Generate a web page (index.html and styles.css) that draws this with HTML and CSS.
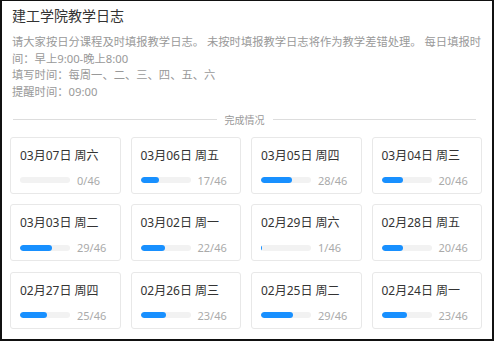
FILE: index.html
```html
<!DOCTYPE html>
<html lang="zh-CN">
<head>
  <meta charset="UTF-8" />
  <meta name="viewport" content="width=device-width, initial-scale=1.0" />
  <title>建工学院教学日志</title>
  <link rel="stylesheet" href="styles.css">
</head>
<body>
  <div class="page">
    <h1 class="title">建工学院教学日志</h1>
    <div class="notice">
      <p>请大家按日分课程及时填报教学日志。 未按时填报教学日志将作为教学差错处理。 每日填报时间：早上9:00-晚上8:00</p>
      <p>填写时间：每周一、二、三、四、五、六</p>
      <p>提醒时间：09:00</p>
    </div>

    <div class="divider"><span>完成情况</span></div>

    <div class="days">
      <div class="day">
        <div class="day-date">03月07日 周六</div>
        <div class="day-progress"><div class="bar"><div class="fill" style="width: 0%"></div></div><span class="count">0/46</span></div>
      </div>
      <div class="day">
        <div class="day-date">03月06日 周五</div>
        <div class="day-progress"><div class="bar"><div class="fill" style="width: 37%"></div></div><span class="count">17/46</span></div>
      </div>
      <div class="day">
        <div class="day-date">03月05日 周四</div>
        <div class="day-progress"><div class="bar"><div class="fill" style="width: 61%"></div></div><span class="count">28/46</span></div>
      </div>
      <div class="day">
        <div class="day-date">03月04日 周三</div>
        <div class="day-progress"><div class="bar"><div class="fill" style="width: 43%"></div></div><span class="count">20/46</span></div>
      </div>

      <div class="day">
        <div class="day-date">03月03日 周二</div>
        <div class="day-progress"><div class="bar"><div class="fill" style="width: 63%"></div></div><span class="count">29/46</span></div>
      </div>
      <div class="day">
        <div class="day-date">03月02日 周一</div>
        <div class="day-progress"><div class="bar"><div class="fill" style="width: 48%"></div></div><span class="count">22/46</span></div>
      </div>
      <div class="day">
        <div class="day-date">02月29日 周六</div>
        <div class="day-progress"><div class="bar"><div class="fill" style="width: 2%"></div></div><span class="count">1/46</span></div>
      </div>
      <div class="day">
        <div class="day-date">02月28日 周五</div>
        <div class="day-progress"><div class="bar"><div class="fill" style="width: 43%"></div></div><span class="count">20/46</span></div>
      </div>

      <div class="day">
        <div class="day-date">02月27日 周四</div>
        <div class="day-progress"><div class="bar"><div class="fill" style="width: 54%"></div></div><span class="count">25/46</span></div>
      </div>
      <div class="day">
        <div class="day-date">02月26日 周三</div>
        <div class="day-progress"><div class="bar"><div class="fill" style="width: 50%"></div></div><span class="count">23/46</span></div>
      </div>
      <div class="day">
        <div class="day-date">02月25日 周二</div>
        <div class="day-progress"><div class="bar"><div class="fill" style="width: 63%"></div></div><span class="count">29/46</span></div>
      </div>
      <div class="day">
        <div class="day-date">02月24日 周一</div>
        <div class="day-progress"><div class="bar"><div class="fill" style="width: 50%"></div></div><span class="count">23/46</span></div>
      </div>
    </div>
  </div>
</body>
</html>
```

FILE: styles.css
```css
* {
  box-sizing: border-box;
  margin: 0;
  padding: 0;
}

html, body {
  height: 100%;
}

body {
  background: #fff;
  font-family: "Noto Sans", "Noto Sans CJK SC", sans-serif;
  color: #333;
}

.page {
  height: 341px;
  border: 2px solid #111;
  border-top-width: 1px;
  padding: 5px 10px 0 8px;
}

.title {
  font-size: 14px;
  font-weight: normal;
  line-height: 20px;
  color: #333;
  padding-left: 2px;
}

.notice {
  margin-top: 8px;
  padding-left: 2px;
  font-size: 11.3px;
  line-height: 16.7px;
  color: #999;
}

.divider {
  display: flex;
  align-items: center;
  margin: 12px 6px 0 3px;
  font-size: 10px;
  line-height: 14px;
  color: #999;
}

.divider::before,
.divider::after {
  content: "";
  flex: 1;
  border-top: 1px solid #ddd;
}

.divider span {
  padding: 0 8px;
}

.days {
  display: grid;
  grid-template-columns: repeat(4, 1fr);
  column-gap: 10px;
  row-gap: 10.5px;
  margin-top: 10px;
}

.day {
  height: 57px;
  border: 1px solid #e8e8e8;
  border-radius: 3px;
  padding: 10px 9px 0 9px;
}

.day-date {
  font-size: 12px;
  line-height: 16px;
  color: #333;
}

.day-progress {
  display: flex;
  align-items: center;
  margin-top: 9px;
}

.bar {
  width: 50px;
  height: 6px;
  border-radius: 3px;
  background: #f2f2f2;
  overflow: hidden;
}

.fill {
  height: 100%;
  border-radius: 3px;
  background: #1890ff;
}

.count {
  margin-left: 7px;
  font-size: 11px;
  color: #aaa;
}
```
